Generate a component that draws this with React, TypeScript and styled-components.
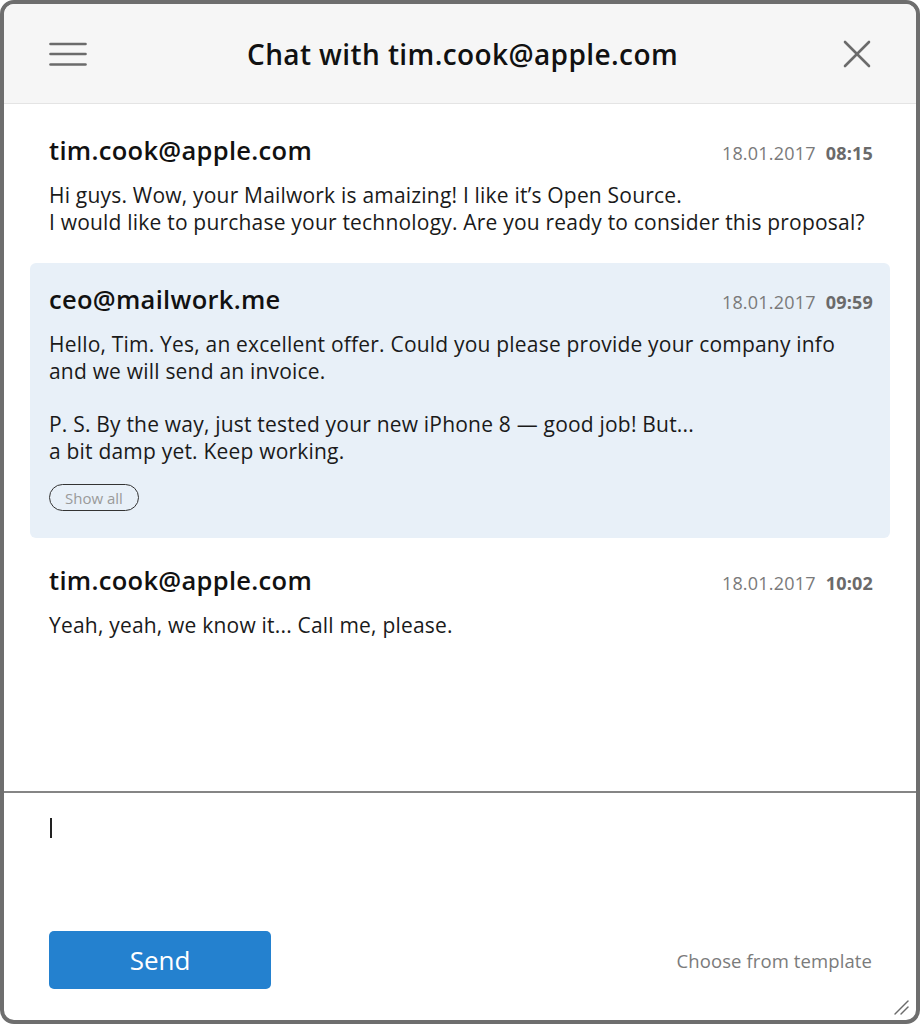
import styled, { createGlobalStyle } from "styled-components";

const GlobalStyle = createGlobalStyle`
  html, body {
    margin: 0;
    padding: 0;
    background: #ffffff;
  }
  body {
    font-family: "Open Sans", Lato, "Liberation Sans", sans-serif;
    color: #1a1a1a;
  }
  * {
    box-sizing: border-box;
  }
`;

const Window = styled.div`
  width: 920px;
  height: 1024px;
  border: 4px solid #6e6e6e;
  border-radius: 14px;
  overflow: hidden;
  display: flex;
  flex-direction: column;
  position: relative;
  background: #fff;
`;

const Header = styled.header`
  height: 100px;
  flex: none;
  background: #f6f6f6;
  border-bottom: 1px solid #e4e4e4;
  display: flex;
  align-items: center;
  justify-content: space-between;
  padding: 0 40px 0 45px;
`;

const IconButton = styled.button`
  border: none;
  background: none;
  padding: 0;
  width: 38px;
  height: 38px;
  display: flex;
  align-items: center;
  justify-content: center;
  cursor: pointer;
`;

const Title = styled.h1`
  margin: 0;
  font-size: 28px;
  font-weight: 600;
  letter-spacing: 0.4px;
  color: #111;
`;

const MessageList = styled.div`
  flex: 1;
  padding: 10px 26px 0;
  display: flex;
  flex-direction: column;
  gap: 6px;
`;

const Message = styled.div<{ $highlight?: boolean }>`
  padding: 21px 17px 21px 19px;
  border-radius: 6px;
  background: ${({ $highlight }) => ($highlight ? "#e8f0f8" : "transparent")};
  padding-bottom: ${({ $highlight }) => ($highlight ? "27px" : "21px")};
`;

const MessageHead = styled.div`
  display: flex;
  justify-content: space-between;
  align-items: baseline;
  margin-bottom: 17px;
`;

const Sender = styled.div`
  font-size: 25.5px;
  font-weight: 600;
  line-height: 30px;
  letter-spacing: 0.3px;
  color: #111;
`;

const Stamp = styled.div`
  font-size: 18px;
  letter-spacing: 0.2px;
  color: #7a7a7a;

  b {
    margin-left: 10px;
    font-weight: 700;
    color: #6a6a6a;
  }
`;

const Body = styled.p`
  margin: 0;
  font-size: 21px;
  line-height: 27px;
  letter-spacing: 0.2px;
  color: #1a1a1a;

  & + & {
    margin-top: 26px;
  }
`;

const ShowAll = styled.button`
  margin-top: 19px;
  height: 27px;
  padding: 0 15px;
  border: 1.5px solid #333;
  border-radius: 14px;
  background: transparent;
  font-family: inherit;
  font-size: 15px;
  color: #9a9a9a;
  cursor: pointer;
`;

const Composer = styled.div`
  flex: none;
  height: 229px;
  border-top: 2px solid #858585;
  padding: 25px 45px 31px 45px;
  display: flex;
  flex-direction: column;
  justify-content: space-between;
`;

const Caret = styled.span`
  display: block;
  margin-left: 1px;
  width: 2px;
  height: 20px;
  background: #222;
`;

const ComposerFoot = styled.div`
  display: flex;
  align-items: center;
  justify-content: space-between;
`;

const SendButton = styled.button`
  width: 222px;
  height: 58px;
  border: none;
  border-radius: 5px;
  background: #2481cf;
  color: #fff;
  font-family: inherit;
  font-size: 26px;
  cursor: pointer;
`;

const TemplateLink = styled.a`
  font-size: 18.5px;
  letter-spacing: 0.1px;
  color: #7b7b7b;
  margin-right: -1px;
  cursor: pointer;
`;

const ResizeGrip = styled.svg`
  position: absolute;
  right: 6px;
  bottom: 4px;
`;

const messages = [
  {
    from: "tim.cook@apple.com",
    date: "18.01.2017",
    time: "08:15",
    paragraphs: [
      [
        "Hi guys. Wow, your Mailwork is amaizing! I like it’s Open Source.",
        "I would like to purchase your technology. Are you ready to consider this proposal?",
      ],
    ],
  },
  {
    from: "ceo@mailwork.me",
    date: "18.01.2017",
    time: "09:59",
    highlight: true,
    showAll: true,
    paragraphs: [
      [
        "Hello, Tim. Yes, an excellent offer. Could you please provide your company info",
        "and we will send an invoice.",
      ],
      ["P. S. By the way, just tested your new iPhone 8 — good job! But...", "a bit damp yet. Keep working."],
    ],
  },
  {
    from: "tim.cook@apple.com",
    date: "18.01.2017",
    time: "10:02",
    paragraphs: [["Yeah, yeah, we know it... Call me, please."]],
  },
];

const App = () => {
  return (
    <>
      <GlobalStyle />
      <Window>
        <Header>
          <IconButton aria-label="Menu">
            <svg width="38" height="24" viewBox="0 0 38 24">
              <g stroke="#6b6b6b" strokeWidth="2.6" strokeLinecap="round">
                <line x1="1.5" y1="2" x2="36.5" y2="2" />
                <line x1="1.5" y1="12" x2="36.5" y2="12" />
                <line x1="1.5" y1="22.5" x2="36.5" y2="22.5" />
              </g>
            </svg>
          </IconButton>
          <Title>Chat with tim.cook@apple.com</Title>
          <IconButton aria-label="Close">
            <svg width="28" height="28" viewBox="0 0 28 28">
              <g stroke="#6b6b6b" strokeWidth="2.6" strokeLinecap="round">
                <line x1="2" y1="2" x2="26" y2="26" />
                <line x1="26" y1="2" x2="2" y2="26" />
              </g>
            </svg>
          </IconButton>
        </Header>

        <MessageList>
          {messages.map((m, i) => (
            <Message key={i} $highlight={m.highlight}>
              <MessageHead>
                <Sender>{m.from}</Sender>
                <Stamp>
                  {m.date}
                  <b>{m.time}</b>
                </Stamp>
              </MessageHead>
              {m.paragraphs.map((p, j) => (
                <Body key={j}>
                  {p.map((line, k) => (
                    <span key={k}>
                      {line}
                      {k < p.length - 1 && <br />}
                    </span>
                  ))}
                </Body>
              ))}
              {m.showAll && <ShowAll>Show all</ShowAll>}
            </Message>
          ))}
        </MessageList>

        <Composer>
          <Caret />
          <ComposerFoot>
            <SendButton>Send</SendButton>
            <TemplateLink>Choose from template</TemplateLink>
          </ComposerFoot>
        </Composer>

        <ResizeGrip width="18" height="18" viewBox="0 0 18 18">
          <g stroke="#6b6b6b" strokeWidth="1.4" strokeLinecap="round">
            <line x1="3" y1="16" x2="16" y2="3" />
            <line x1="9" y1="16" x2="16" y2="9" />
          </g>
        </ResizeGrip>
      </Window>
    </>
  );
};

export default App;
